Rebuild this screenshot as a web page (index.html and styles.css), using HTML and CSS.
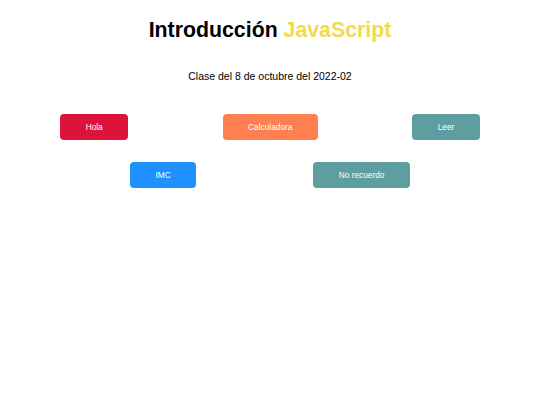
FILE: index.html
```html
<!DOCTYPE html>
<html lang="es">
<head>
<meta charset="utf-8">
<title>Introducción JavaScript</title>
<link rel="stylesheet" href="styles.css">
</head>
<body>
<h1 class="title">Introducción <span class="js">JavaScript</span></h1>
<p class="subtitle">Clase del 8 de octubre del 2022-02</p>
<div class="row row-around">
  <button class="btn btn-crimson">Hola</button>
  <button class="btn btn-coral">Calculadora</button>
  <button class="btn btn-cadet">Leer</button>
</div>
<div class="row row-evenly">
  <button class="btn btn-blue">IMC</button>
  <button class="btn btn-cadet">No recuerdo</button>
</div>
</body>
</html>
```
FILE: styles.css
```css
html, body {
  background: #ffffff;
}
body {
  margin: 8px;
  font-family: "Liberation Sans", Arial, sans-serif;
  color: #000000;
}
.title {
  margin: 10px 0 0;
  font-size: 21.3px;
  line-height: 24px;
  font-weight: bold;
  text-align: center;
}
.js {
  color: #f0db4f;
}
.subtitle {
  margin: 28px 0 0;
  font-size: 10.5px;
  line-height: 12px;
  text-align: center;
}
.row {
  display: flex;
  padding: 0 5px;
}
.row-around {
  justify-content: space-around;
  margin-top: 32px;
}
.row-evenly {
  justify-content: space-evenly;
  margin-top: 22px;
}
.btn {
  height: 26px;
  padding: 0 25.5px;
  border: none;
  border-radius: 4px;
  font-family: "Liberation Sans", Arial, sans-serif;
  font-size: 8.3px;
  color: #ffffff;
  cursor: pointer;
}
.btn-crimson { background: #dc143c; }
.btn-coral { background: #ff7f50; }
.btn-cadet { background: #5f9ea0; }
.btn-blue { background: #1e90ff; }
```
